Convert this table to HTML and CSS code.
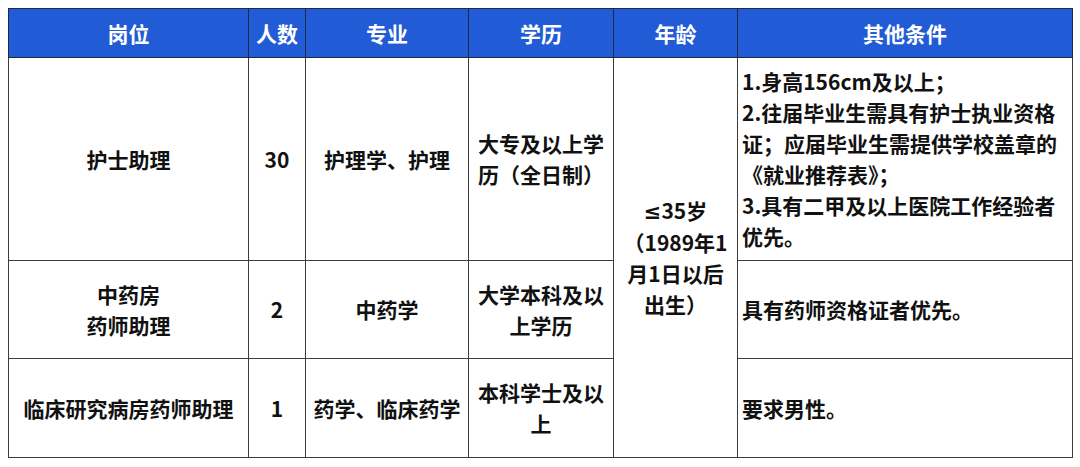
FILE: index.html
```html
<!DOCTYPE html>
<html lang="zh-CN">
<head>
<meta charset="utf-8">
<title>招聘岗位</title>
<link rel="stylesheet" href="styles.css">
</head>
<body>
<div class="page">
  <table class="jobs">
    <colgroup>
      <col class="c-post">
      <col class="c-num">
      <col class="c-major">
      <col class="c-edu">
      <col class="c-age">
      <col class="c-other">
    </colgroup>
    <thead>
      <tr class="head-row">
        <th>岗位</th>
        <th>人数</th>
        <th>专业</th>
        <th>学历</th>
        <th>年龄</th>
        <th>其他条件</th>
      </tr>
    </thead>
    <tbody>
      <tr class="row-1">
        <td>护士助理</td>
        <td>30</td>
        <td>护理学、护理</td>
        <td>大专及以上学<br>历（全日制）</td>
        <td rowspan="3"><span class="latin">≤</span>35岁<br>（1989年1<br>月1日以后<br>出生）</td>
        <td class="left">1.身高156cm及以上；<br>2.往届毕业生需具有护士执业资格<br>证；应届毕业生需提供学校盖章的<br>《就业推荐表》；<br>3.具有二甲及以上医院工作经验者<br>优先。</td>
      </tr>
      <tr class="row-2">
        <td>中药房<br>药师助理</td>
        <td>2</td>
        <td>中药学</td>
        <td>大学本科及以<br>上学历</td>
        <td class="left">具有药师资格证者优先。</td>
      </tr>
      <tr class="row-3">
        <td>临床研究病房药师助理</td>
        <td>1</td>
        <td>药学、临床药学</td>
        <td>本科学士及以<br>上</td>
        <td class="left">要求男性。</td>
      </tr>
    </tbody>
  </table>
</div>
</body>
</html>
```

FILE: styles.css
```css
html, body {
  margin: 0;
  padding: 0;
  background: #ffffff;
}

.page {
  padding: 8px 0 0 8px;
}

.jobs {
  border-collapse: collapse;
  table-layout: fixed;
  width: 1064px;
  font-family: "Noto Sans CJK SC", "Noto Sans", sans-serif;
  font-weight: 700;
  font-size: 21px;
  line-height: 31px;
  color: #111111;
}

.c-post { width: 240px; }
.c-num { width: 57px; }
.c-major { width: 163px; }
.c-edu { width: 145px; }
.c-age { width: 124px; }
.c-other { width: 335px; }

.jobs th,
.jobs td {
  border: 1px solid #3c3c3c;
  padding: 0 4px;
  text-align: center;
  vertical-align: middle;
  white-space: nowrap;
  overflow: hidden;
}

.jobs th {
  background: #215cd6;
  color: #ffffff;
  font-weight: 700;
  border-color: #1e2a48;
}

.head-row { height: 49px; }
.row-1 { height: 203px; }
.row-2 { height: 98px; }
.row-3 { height: 99px; }

.jobs td.left {
  text-align: left;
}

.latin {
  font-family: "Noto Sans", "DejaVu Sans", sans-serif;
}
```
